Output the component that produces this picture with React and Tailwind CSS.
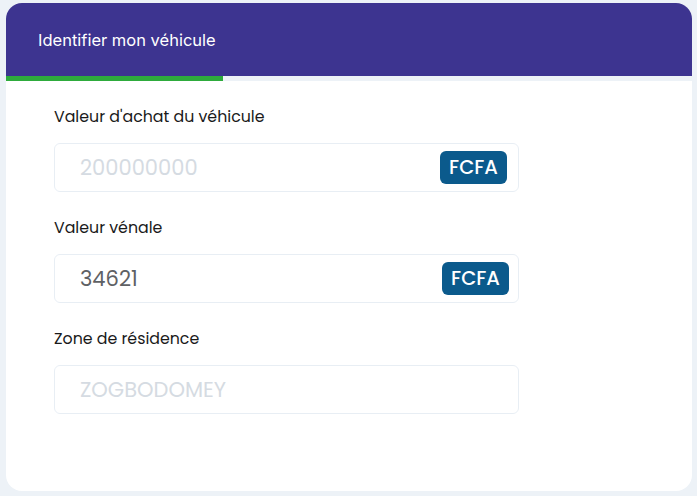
import React from 'react';

const poppins = "font-['Poppins','Open_Sans','DejaVu_Sans',sans-serif]";

function Field({ label, value, placeholder, unit, tight }) {
    return (
        <div className='mb-6'>
            <div className={`text-[15.8px] leading-6 text-[#1a1a1a] mb-[14px] ${poppins}`}>{label}</div>
            <div className={`w-[465px] h-[49px] border border-[#e8eef4] rounded-md flex items-center justify-between pl-[25px] ${tight ? 'pr-[9px]' : 'pr-[11px]'}`}>
                {value
                    ? <span className={`text-[21px] text-[#5f6164] ${poppins}`}>{value}</span>
                    : <span className={`text-[21px] text-[#d5dbe2] ${poppins}`}>{placeholder}</span>}
                {unit && (
                    <span className={`h-[33px] w-[67px] rounded-md bg-[#0b5a8c] text-white text-[19.5px] font-medium flex items-center justify-center ${poppins}`}>
                        {unit}
                    </span>
                )}
            </div>
        </div>
    )
}

export default function App() {
    return (
        <div className='w-[697px] h-[496px] bg-[#edf2f7] pt-[3px] pl-[6px]'>
            <div className='w-[686px] h-[488px] bg-white rounded-2xl overflow-hidden'>
                {/* Header */}
                <div className='h-[73px] bg-[#3d3490] flex items-center pl-[32px]'>
                    <span className="text-white text-[16.5px] font-['Inter',sans-serif] pt-[1px]">Identifier mon véhicule</span>
                </div>
                {/* Progress */}
                <div className='h-[5px] bg-[#edf2f7]'>
                    <div className='h-full w-[217px] bg-[#2eab3c]'></div>
                </div>
                {/* Form */}
                <div className='pt-6 pl-[48px]'>
                    <Field label="Valeur d'achat du véhicule" placeholder='200000000' unit='FCFA' />
                    <Field label='Valeur vénale' value='34621' unit='FCFA' tight />
                    <Field label='Zone de résidence' placeholder='ZOGBODOMEY' />
                </div>
            </div>
        </div>
    )
}
